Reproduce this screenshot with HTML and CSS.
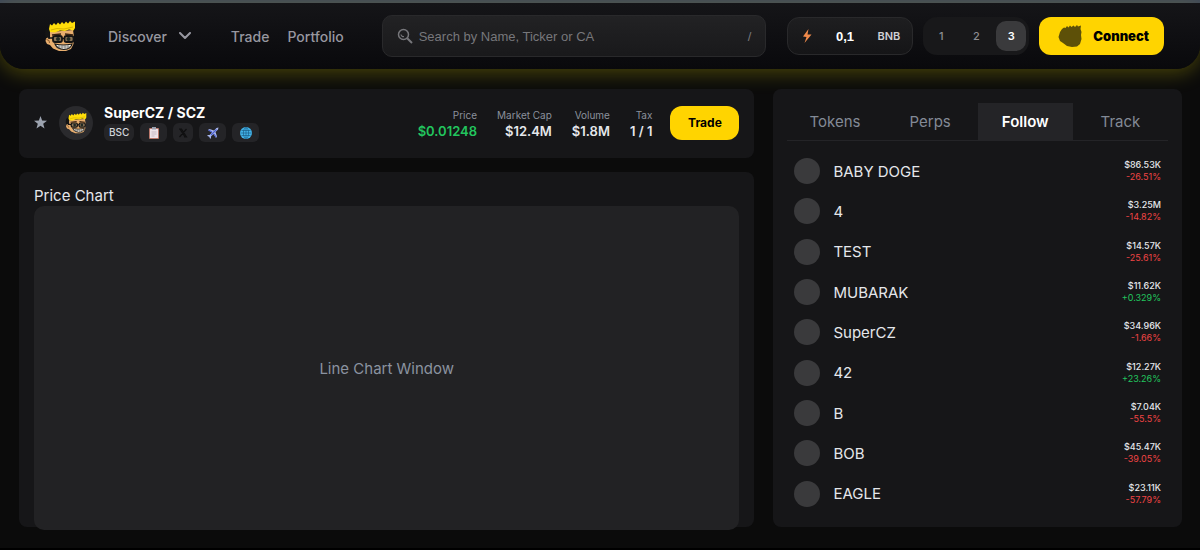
FILE: index.html
```
<!DOCTYPE html>
<html lang="en">
<head>
    <meta charset="UTF-8">
    <meta name="viewport" content="width=device-width, initial-scale=1.0">
    <title>SuperCZ / SCZ</title>
    <link rel="stylesheet" href="styles.css">
</head>
<body>
    <!-- Shared mascot artwork -->
    <svg class="sprite" aria-hidden="true">
        <symbol id="mascot" viewBox="0 0 32 32">
            <path d="M3 22 1 15 1.500 10 4 8 6 5 8 10 6 16 5 21Z" fill="#141414"/>
            <path d="M6 12 29 10 30 17 29.500 24 27 29 22 31 15 31 9 28.500 6 25 3 24 1.500 21 2 18.500 4 17.500 6 19Z" fill="#e8ae6e"/>
            <path d="M2.500 19.500 5 20.500 5.500 23" fill="none" stroke="#8a5a2c" stroke-width="1"/>
            <path d="M6 12 5 9 6 4 8 5.500 10 3 12 5 14 2.500 16 4.500 18 2 20 4 22 1.500 24 3.500 26 1 28 3 31 1.500 31 8 29.500 10.500 25 9.500 21 11 16 10.500 11 12.500Z" fill="#ffde0a"/>
            <path d="M7 10 13 8.500 20 9 29 7" fill="none" stroke="#d8b400" stroke-width="1"/>
            <path d="M4 18 9 18M18 18.500h2.500" stroke="#141414" stroke-width="1.500"/>
            <rect x="9" y="16" width="9" height="6" rx="2" fill="#8b7456" stroke="#141414" stroke-width="1.800"/>
            <rect x="20.500" y="16" width="9" height="6" rx="2" fill="#8b7456" stroke="#141414" stroke-width="1.800"/>
            <circle cx="14" cy="19" r="2" fill="#202a24"/>
            <circle cx="24.500" cy="19" r="2" fill="#202a24"/>
            <path d="M8 15 17 14M21 14 29 15" stroke="#3a2413" stroke-width="1.500"/>
            <path d="M11 24Q19 26 28 24 27 29 20 29.500 13 29 11 24Z" fill="#f4f1e6" stroke="#141414" stroke-width="1.200"/>
            <path d="M12 27h15M15 25v4M18 25v4.500M21 25v4.500M24 25v4" stroke="#5a5a5a" stroke-width="0.600"/>
        </symbol>
    </svg>

    <div class="app">
        <header class="header">
            <a class="logo" href="#" aria-label="Home"><svg><use href="#mascot"/></svg></a>
            <nav class="nav">
                <button type="button" class="nav-discover">Discover
                    <svg viewBox="0 0 14 8" width="14" height="8" fill="none" stroke="currentColor" stroke-width="2" stroke-linecap="round" stroke-linejoin="round" aria-hidden="true"><path d="M2 1l5 5 5-5"/></svg>
                </button>
                <a href="#">Trade</a>
                <a href="#">Portfolio</a>
            </nav>
            <label class="search">
                <svg viewBox="0 0 16 16" width="16" height="16" fill="none" stroke="currentColor" aria-hidden="true">
                    <circle cx="6.500" cy="6.500" r="5" stroke-width="1.500"/>
                    <path d="M10.200 10.200 15 15" stroke-width="2"/>
                    <path d="M4 6.500a2.500 2.500 0 0 0 3 2" stroke-width="1.200"/>
                </svg>
                <input type="text" placeholder="Search by Name, Ticker or CA" aria-label="Search by Name, Ticker or CA">
                <span class="slash">/</span>
            </label>
            <label class="amount">
                <svg viewBox="0 0 10 14" width="10" height="14" aria-hidden="true"><path d="M6.500 0 1 7.500 4.500 8 2.500 14 9.500 5.500 5.500 5.500Z" fill="#f08a4b"/></svg>
                <input type="text" value="0,1" aria-label="Quick buy amount">
                <span>BNB</span>
            </label>
            <div class="presets">
                <button type="button">1</button>
                <button type="button">2</button>
                <button type="button" class="active">3</button>
            </div>
            <button type="button" class="connect">
                <svg viewBox="0 0 24 24" width="24" height="24" aria-hidden="true"><path d="M2 8 4 5 6 3.500 7.500 4 9 2 10.500 3.500 12 1.500 13.500 3 15.500 1.500 17 3 19 1 20 2.500 23 1.500 22.500 5 23.500 8 23 11 23.500 15 22 20 19 22.500 14 23 9 22 5 19 2 17 .500 13Z" fill="#5d5008"/></svg>
                Connect
            </button>
        </header>

        <main class="main">
            <section class="card token">
                <button type="button" class="star" aria-label="Add to favourites">
                    <svg viewBox="0 0 12 12" width="13" height="13" aria-hidden="true"><path d="M6 0 7.500 4.200 12 4.400 8.500 7.200 9.700 11.500 6 9 2.300 11.500 3.500 7.200 0 4.400 4.500 4.200Z" fill="currentColor"/></svg>
                </button>
                <div class="avatar"><svg><use href="#mascot"/></svg></div>
                <div class="token-info">
                    <h1>SuperCZ / SCZ</h1>
                    <div class="badges">
                        <span class="badge">BSC</span>
                        <button type="button" class="badge icon" aria-label="Copy address">
                            <svg viewBox="0 0 12 12" width="12" height="12"><rect x="1" y="1" width="10" height="11" rx="1" fill="#b9776b"/><rect x="2" y="2" width="8" height="9" fill="#eee3ea"/><path d="M4 0h4v2.500H4z" fill="#9aa0ae"/><path d="M3.500 5h5M3.500 7h5M3.500 9h3" stroke="#b8a7b4" stroke-width=".7"/></svg>
                        </button>
                        <a href="#" class="badge icon narrow" aria-label="X">
                            <svg viewBox="0 0 10 10" width="10" height="10" fill="none" stroke="#0f0f10"><path d="M2 1h1.500l5 8H7zM8.500 1 1.500 9M1 1h3M6 9h3" stroke-width="1.200"/></svg>
                        </a>
                        <a href="#" class="badge icon" aria-label="Telegram">
                            <svg viewBox="0 0 12 12" width="12" height="12"><path d="M1 3 2.500 2 7 3.500 9.500 1 11.500.500 11 2.500 8.500 5 10 9.500 9 11 6.500 7 4 9.500 4 11.500 3 11.500 2.200 9.800.500 9 .500 8 2.500 8 5 5.500Z" fill="#a9b8ef"/><path d="M4 8 9.500 2.500M1.500 3 5 5M9 10 7 7" stroke="#4f62cf" stroke-width="1.200"/></svg>
                        </a>
                        <a href="#" class="badge icon" aria-label="Website">
                            <svg viewBox="0 0 12 12" width="12" height="12" fill="none" stroke="#17557c" stroke-width=".6"><circle cx="6" cy="6" r="6" fill="#42b3e8" stroke="none"/><ellipse cx="6" cy="6" rx="2.600" ry="5.400"/><path d="M6 .500v11M.500 6h11M1.500 3.500h9M1.500 8.500h9"/></svg>
                        </a>
                    </div>
                </div>
                <dl class="stats">
                    <div><dt>Price</dt><dd class="up">$0.01248</dd></div>
                    <div><dt>Market Cap</dt><dd>$12.4M</dd></div>
                    <div><dt>Volume</dt><dd>$1.8M</dd></div>
                    <div><dt>Tax</dt><dd>1 / 1</dd></div>
                </dl>
                <button type="button" class="trade">Trade</button>
            </section>

            <section class="card chart">
                <h2>Price Chart</h2>
                <div class="chart-window">Line Chart Window</div>
            </section>

            <aside class="card watch">
                <div class="tabs" role="tablist">
                    <button type="button" role="tab">Tokens</button>
                    <button type="button" role="tab">Perps</button>
                    <button type="button" role="tab" class="active" aria-selected="true">Follow</button>
                    <button type="button" role="tab">Track</button>
                </div>
                <ul class="coins">
                    <li><i></i><span class="name">BABY DOGE</span><span class="value">$86.53K<b class="down">-26.51%</b></span></li>
                    <li><i></i><span class="name">4</span><span class="value">$3.25M<b class="down">-14.82%</b></span></li>
                    <li><i></i><span class="name">TEST</span><span class="value">$14.57K<b class="down">-25.61%</b></span></li>
                    <li><i></i><span class="name">MUBARAK</span><span class="value">$11.62K<b class="up">+0.329%</b></span></li>
                    <li><i></i><span class="name">SuperCZ</span><span class="value">$34.96K<b class="down">-1.66%</b></span></li>
                    <li><i></i><span class="name">42</span><span class="value">$12.27K<b class="up">+23.26%</b></span></li>
                    <li><i></i><span class="name">B</span><span class="value">$7.04K<b class="down">-55.5%</b></span></li>
                    <li><i></i><span class="name">BOB</span><span class="value">$45.47K<b class="down">-39.05%</b></span></li>
                    <li><i></i><span class="name">EAGLE</span><span class="value">$23.11K<b class="down">-57.79%</b></span></li>
                </ul>
            </aside>
        </main>
    </div>
</body>
</html>
```
FILE: styles.css
```
* {
    box-sizing: border-box;
}
body {
    margin: 0;
    background: #0b0b0b;
    color: #e5e7eb;
    font-family: Inter, sans-serif;
    font-size: 15px;
}
button, input {
    font: inherit;
    color: inherit;
    background: none;
    border: none;
    padding: 0;
}
button {
    cursor: pointer;
}
a {
    color: inherit;
    text-decoration: none;
}
h1, h2, dl, dd, ul {
    margin: 0;
    padding: 0;
}
.sprite {
    display: none;
}
.app {
    display: flex;
    flex-direction: column;
    min-height: 100vh;
    border-top: 3px solid #3b4559;
    border-bottom: 2px solid #000;
}

/* Header */
.header {
    display: flex;
    align-items: center;
    height: 66px;
    padding: 0 36px 0 44px;
    border-radius: 0 0 24px 24px;
    background: linear-gradient(#151518, #09090c);
    box-shadow: 0 4px 20px rgba(255, 238, 0, 0.25);
}
.logo svg {
    display: block;
    width: 32px;
    height: 32px;
}
.nav {
    display: flex;
    align-items: center;
    gap: 18px;
    margin-left: 32px;
    color: #9797a0;
    font-size: 14px;
    font-weight: 500;
}
.nav-discover {
    display: flex;
    align-items: center;
    gap: 11px;
    margin-right: 21px;
}
.search {
    display: flex;
    flex: 1;
    align-items: center;
    gap: 6px;
    height: 42px;
    margin-left: 38px;
    padding: 0 14px;
    border: 1px solid #29292b;
    border-radius: 10px;
    background: linear-gradient(#222224, #19191b);
    color: #77777b;
    font-family: "Liberation Sans", Arial, sans-serif;
    font-size: 13px;
}
.search input {
    flex: 1;
    min-width: 0;
}
.search input::placeholder {
    color: #77777b;
}
.amount {
    display: flex;
    align-items: center;
    height: 38px;
    margin-left: 21px;
    padding: 0 12px 0 14px;
    border: 1px solid #29292b;
    border-radius: 12px;
    background: linear-gradient(#1e1e20, #151517);
    color: #cfcfd3;
    font-size: 11px;
    font-weight: 600;
}
.amount input {
    width: 65px;
    text-align: center;
    color: #fff;
    font-family: "Liberation Sans", Arial, sans-serif;
    font-size: 13px;
    font-weight: 700;
}
.presets {
    display: flex;
    align-items: center;
    gap: 5px;
    height: 38px;
    margin-left: 10px;
    padding: 0 3px;
    border-radius: 14px;
    background: #18181a;
}
.presets button {
    width: 30px;
    height: 30px;
    border-radius: 10px;
    color: #8d8d92;
    font-size: 11px;
    font-weight: 500;
}
.presets .active {
    background: #3a3a3c;
    color: #fff;
    font-weight: 600;
}
.connect {
    display: flex;
    align-items: center;
    gap: 11px;
    height: 38px;
    margin-left: 10px;
    padding: 0 15px 0 19px;
    border-radius: 12px;
    background: #ffd400;
    color: #000;
    font-size: 13px;
    font-weight: 900;
}

/* Content */
.main {
    display: grid;
    flex: 1;
    grid-template-columns: 9fr 5fr;
    grid-template-rows: 69px 1fr;
    gap: 14px 19px;
    padding: 20px 18px 21px 19px;
}
.card {
    border-radius: 8px;
    background: #161618;
}
.token {
    display: flex;
    align-items: center;
    padding: 0 15px 2px;
}
.star {
    display: flex;
    color: #9ca3af;
}
.avatar {
    display: grid;
    place-items: center;
    width: 34px;
    height: 34px;
    margin: 0 11px 0 12px;
    border-radius: 50%;
    background: #2a2a2d;
}
.avatar svg {
    width: 22px;
    height: 22px;
}
.token-info h1 {
    color: #fff;
    font-size: 14px;
    font-weight: 700;
    line-height: 20px;
}
.badges {
    display: flex;
    align-items: center;
    gap: 6px;
}
.badge {
    padding: 0 5px;
    border-radius: 6px;
    background: #242427;
    color: #d1d5db;
    font-size: 10px;
    font-weight: 500;
    line-height: 17px;
}
.badge.icon {
    display: grid;
    place-items: center;
    width: 27px;
    height: 19px;
}
.badge.narrow {
    width: 20px;
}
.stats {
    display: flex;
    gap: 20px;
    margin-left: auto;
    text-align: right;
}
.stats dt {
    color: #8b919c;
    font-size: 10px;
    line-height: 16px;
}
.stats dd {
    font-size: 13px;
    font-weight: 600;
    line-height: 16px;
}
.up {
    color: #22c55e;
}
.down {
    color: #ef4444;
}
.trade {
    width: 69px;
    height: 34px;
    margin-left: 18px;
    border-radius: 12px;
    background: #ffd400;
    color: #000;
    font-size: 12px;
    font-weight: 700;
}
.chart {
    display: flex;
    flex-direction: column;
    padding: 14px 15px 0;
}
.chart h2 {
    font-size: 15px;
    font-weight: 400;
    line-height: 20px;
}
/* runs slightly past the bottom of its card */
.chart-window {
    display: grid;
    flex: 1;
    place-items: center;
    margin-bottom: -3px;
    border-radius: 10px;
    background: #222224;
    color: #8b93a0;
}
.watch {
    display: flex;
    flex-direction: column;
    grid-column: 2;
    grid-row: 1 / 3;
    padding: 14px 14px 13px;
}
.tabs {
    display: grid;
    grid-template-columns: repeat(4, 1fr);
    margin-bottom: 10px;
    border-bottom: 1px solid #242427;
}
.tabs button {
    height: 37px;
    color: #838a96;
}
.tabs .active {
    background: #242427;
    color: #fff;
    font-weight: 600;
}
.coins {
    display: grid;
    flex: 1;
    grid-auto-rows: 1fr;
    list-style: none;
}
.coins li {
    display: flex;
    align-items: center;
    gap: 13px;
    padding: 0 7px;
}
.coins i {
    width: 26px;
    height: 26px;
    border-radius: 50%;
    background: #3a3a3c;
}
.value {
    margin-left: auto;
    text-align: right;
    font-size: 9px;
    font-weight: 500;
    line-height: 12px;
}
.value b {
    display: block;
    font-weight: 400;
}
```
